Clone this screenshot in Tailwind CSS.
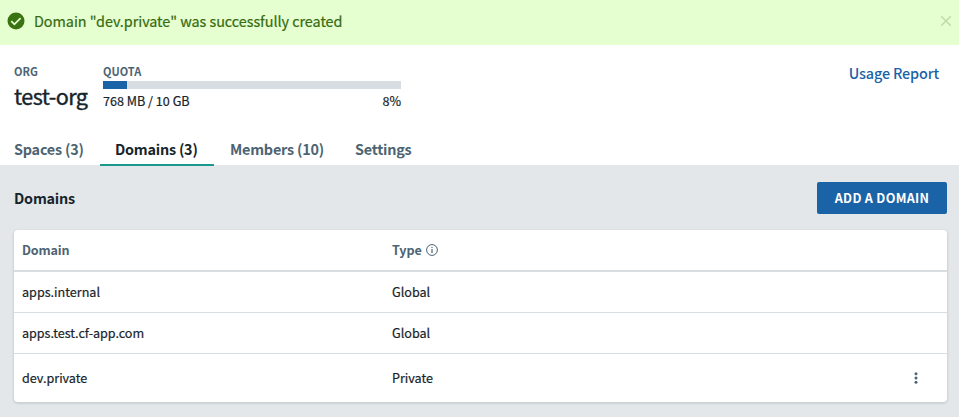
<!DOCTYPE html>
<html lang="en">
<head>
<meta charset="utf-8">
<title>test-org domains</title>
<script src="https://cdn.jsdelivr.net/npm/@tailwindcss/browser@4"></script>
</head>
<body class="w-[959px] h-[417px] overflow-hidden bg-[#e3e7ea] font-['Noto_Sans_CJK_SC','Noto_Sans_CJK_JP',sans-serif] text-[#17242b] text-[12.6px] leading-5">
  <div class="flex h-[45px] items-center bg-[#e6ffd0] pl-[7px] pr-[7px] text-[#366b10]">
    <svg class="mt-[-3px] size-[18px] shrink-0" viewBox="0 0 18 18"><circle cx="9" cy="9" r="8.5" fill="#3a7412"/><path d="M4.3 9.2l3.1 3.1 6.2-6.2" fill="none" stroke="#e6ffd0" stroke-width="1.8"/></svg>
    <p class="ml-[9px] mt-[-3px] text-[14.4px] tracking-[-0.04px] whitespace-nowrap [-webkit-text-stroke:0.2px]">Domain "dev.private" was successfully created</p>
    <svg class="ml-auto mt-[-3px] size-3" viewBox="0 0 12 12"><path d="M1.2 1.2l9.6 9.6M10.8 1.2L1.2 10.8" stroke="#bfdca6" stroke-width="1.5"/></svg>
  </div>
  <header class="h-[120px] bg-white">
    <div class="flex h-[88px] px-[14px]">
      <div class="w-[89px] pt-[18px]">
        <div class="text-[11px] leading-4 font-bold text-[#4d6472]">ORG</div>
        <h1 class="mt-[2px] text-[21.6px] leading-[30px] tracking-[-0.55px] whitespace-nowrap [-webkit-text-stroke:0.4px]">test-org</h1>
      </div>
      <div class="w-[298px] pt-[18px]">
        <div class="text-[11px] leading-4 font-bold text-[#4d6472]">QUOTA</div>
        <div class="mt-[2px] h-2 bg-[#d8dde1]"><div class="h-2 bg-[#1a63a6]" style="width:8%"></div></div>
        <div class="mt-[3px] flex justify-between text-[12.6px] leading-[18px] [-webkit-text-stroke:0.2px]"><span>768 MB / 10 GB</span><span>8%</span></div>
      </div>
      <a class="ml-auto mr-[6px] pt-[17px] text-[14.4px] leading-[21px] font-medium tracking-[-0.15px] text-[#1a63a6]">Usage Report</a>
    </div>
    <nav class="flex h-8 text-[14.4px] leading-[31px] font-bold tracking-[-0.22px] whitespace-nowrap text-[#4d6472]">
      <a class="w-[100px] pl-[14px]">Spaces (3)</a>
      <a class="h-[33px] w-[114px] border-b-2 border-[#1a9a8d] pl-[15px] text-[#17242b]">Domains (3)</a>
      <a class="w-[125px] pl-4">Members (10)</a>
      <a class="pl-4">Settings</a>
    </nav>
  </header>
  <main class="px-3 pl-[14px]">
    <div class="flex h-[65px] items-center justify-between">
      <h2 class="text-[14.4px] font-bold tracking-[-0.2px]">Domains</h2>
      <button class="h-8 w-[130px] rounded-[2px] bg-[#1a63a6] text-[12.6px] font-bold tracking-[0.3px] whitespace-nowrap text-white">ADD A DOMAIN</button>
    </div>
    <section class="h-[172px] rounded bg-white shadow-[0_1px_2px_1px_#cbd1d5] [-webkit-text-stroke:0.2px]">
      <div class="flex h-[42px] items-center border-b-2 border-[#d8dde1] px-2 font-bold tracking-[-0.15px] text-[#4d6472] [-webkit-text-stroke:0]">
        <span class="w-[370px]">Domain</span><span>Type</span>
        <svg class="ml-1 size-3" viewBox="0 0 12 12" fill="none" stroke="#4d6472"><circle cx="6" cy="6" r="5.4"/><path d="M6 5v4M6 2.9v1.2" stroke-width="1.2"/></svg>
      </div>
      <div class="flex h-[41px] items-center border-b border-[#d8dde1] px-2"><span class="w-[370px]">apps.internal</span><span>Global</span></div>
      <div class="flex h-[41px] items-center border-b border-[#d8dde1] px-2"><span class="w-[370px] tracking-[-0.04px]">apps.test.cf-app.com</span><span>Global</span></div>
      <div class="flex h-12 items-center px-2"><span class="w-[370px]">dev.private</span><span>Private</span>
        <svg class="ml-auto mr-[21px] h-3 w-1" viewBox="0 0 4 12" fill="#4d6472"><circle cx="2" cy="1.7" r="1.5"/><circle cx="2" cy="6" r="1.5"/><circle cx="2" cy="10.3" r="1.5"/></svg>
      </div>
    </section>
  </main>
</body>
</html>
